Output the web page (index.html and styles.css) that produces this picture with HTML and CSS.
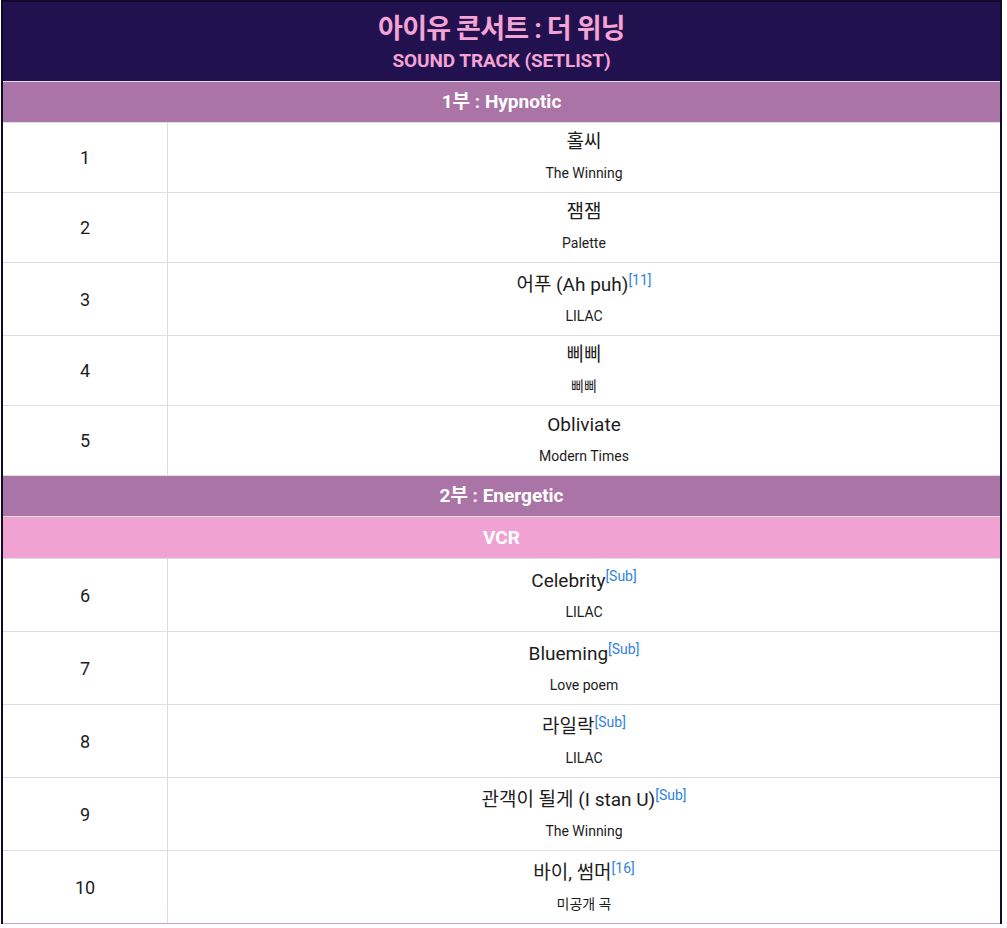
FILE: index.html
```html
<!DOCTYPE html>
<html lang="ko">
<head>
<meta charset="utf-8">
<title>아이유 콘서트 : 더 위닝</title>
<link rel="stylesheet" href="styles.css">
</head>
<body>
<div class="frame">
  <div class="head">
    <div class="head-title">아이유 콘서트 : 더 위닝</div>
    <div class="head-sub">SOUND TRACK (SETLIST)</div>
  </div>
  <div class="sec">1부 : Hypnotic</div>
  <div class="row"><div class="num">1</div><div class="song"><div class="t">홀씨</div><div class="a">The Winning</div></div></div>
  <div class="row"><div class="num">2</div><div class="song"><div class="t">잼잼</div><div class="a">Palette</div></div></div>
  <div class="row"><div class="num">3</div><div class="song"><div class="t">어푸 (Ah puh)<sup>[11]</sup></div><div class="a">LILAC</div></div></div>
  <div class="row"><div class="num">4</div><div class="song"><div class="t">삐삐</div><div class="a">삐삐</div></div></div>
  <div class="row"><div class="num">5</div><div class="song"><div class="t">Obliviate</div><div class="a">Modern Times</div></div></div>
  <div class="sec">2부 : Energetic</div>
  <div class="sec vcr">VCR</div>
  <div class="row"><div class="num">6</div><div class="song"><div class="t">Celebrity<sup>[Sub]</sup></div><div class="a">LILAC</div></div></div>
  <div class="row"><div class="num">7</div><div class="song"><div class="t">Blueming<sup>[Sub]</sup></div><div class="a">Love poem</div></div></div>
  <div class="row"><div class="num">8</div><div class="song"><div class="t">라일락<sup>[Sub]</sup></div><div class="a">LILAC</div></div></div>
  <div class="row"><div class="num">9</div><div class="song"><div class="t">관객이 될게 (I stan U)<sup>[Sub]</sup></div><div class="a">The Winning</div></div></div>
  <div class="row last"><div class="num">10</div><div class="song"><div class="t">바이, 썸머<sup>[16]</sup></div><div class="a">미공개 곡</div></div></div>
</div>
</body>
</html>
```

FILE: styles.css
```css
html, body {
  margin: 0;
  padding: 0;
  background: #ffffff;
}

body {
  font-family: Roboto, "Noto Sans CJK KR", sans-serif;
  color: #1c1c1c;
}

.frame {
  width: 997px;
  margin-left: 1px;
  border: 2px solid #120a2c;
  border-bottom: 0;
}

.head {
  background: #21114f;
  border-bottom: 1px solid #e6dbe6;
  height: 80px;
  box-sizing: border-box;
  padding-top: 11px;
  text-align: center;
  color: #f3a3d4;
  font-weight: 700;
}

.head-title {
  font-size: 27px;
  line-height: 32px;
  letter-spacing: -0.8px;
}

.head-sub {
  margin-top: 4px;
  font-size: 19px;
  line-height: 24px;
  letter-spacing: -0.1px;
}

.sec {
  height: 40px;
  line-height: 40px;
  background: #ab74a7;
  color: #ffffff;
  font-weight: 700;
  font-size: 19px;
  text-align: center;
  border-bottom: 1px solid #dddddd;
}

.sec.vcr {
  background: #f0a3d3;
  height: 41px;
  line-height: 41px;
}

.row {
  display: grid;
  grid-template-columns: 165px 1fr;
  border-bottom: 1px solid #dddddd;
}

.row.last {
  border-bottom-color: #c9a3c6;
}

.num {
  display: flex;
  align-items: center;
  justify-content: center;
  font-size: 18px;
  border-right: 1px solid #dddddd;
}

.song {
  text-align: center;
  padding: 5px 10px 9px;
}

.t {
  font-size: 19px;
  line-height: 28px;
}

.t sup {
  font-size: 14px;
  line-height: 25px;
  vertical-align: 6px;
  color: #3183e0;
}

.a {
  margin-top: 7px;
  font-size: 14px;
  line-height: 20px;
}
```
